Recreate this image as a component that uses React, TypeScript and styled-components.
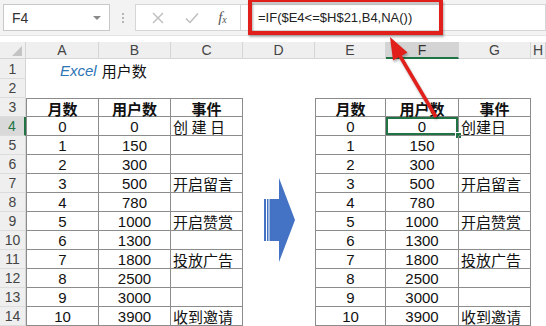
import React from 'react';
import styled, { createGlobalStyle } from 'styled-components';

const GlobalStyle = createGlobalStyle`
  html, body {
    margin: 0;
    padding: 0;
    background: #ffffff;
  }
  body {
    font-family: "Liberation Sans", "Noto Sans CJK SC", sans-serif;
  }
`;

const Page = styled.div`
  position: relative;
  width: 546px;
  height: 326px;
  overflow: hidden;
  background: #ffffff;
`;

const Toolbar = styled.div`
  display: flex;
  align-items: center;
  height: 36px;
  padding-left: 3px;
  box-sizing: border-box;
  background: #f3f3f3;
  border-bottom: 1px solid #e3e3e3;
`;

const NameBox = styled.div`
  display: flex;
  align-items: center;
  justify-content: space-between;
  width: 107px;
  height: 27px;
  box-sizing: border-box;
  padding: 0 8px 0 8px;
  background: #ffffff;
  border: 1px solid #c8c8c8;
  font-size: 14px;
  color: #333;
`;

const Caret = styled.span`
  width: 0;
  height: 0;
  border-left: 4px solid transparent;
  border-right: 4px solid transparent;
  border-top: 4px solid #8a8a8a;
`;

const Grip = styled.div`
  display: flex;
  flex-direction: column;
  align-items: center;
  gap: 2px;
  width: 25px;
`;

const GripDot = styled.span`
  width: 2px;
  height: 2px;
  background: #b5b5b5;
`;

const FxBox = styled.div`
  display: flex;
  align-items: center;
  justify-content: space-around;
  width: 105px;
  height: 27px;
  box-sizing: border-box;
  background: #ffffff;
  border: 1px solid #d6d6d6;
  border-right: none;
  padding: 0 4px 0 6px;
`;

const FxLabel = styled.span`
  font-family: "Liberation Serif", serif;
  font-style: italic;
  font-size: 15px;
  color: #555;

  sub {
    font-size: 10px;
    vertical-align: -1px;
  }
`;

const FormulaInput = styled.div`
  flex: 1;
  display: flex;
  align-items: center;
  height: 27px;
  box-sizing: border-box;
  padding-left: 17px;
  background: #ffffff;
  border: 1px solid #d6d6d6;
  font-size: 13px;
  color: #222;
`;

const Sheet = styled.div`
  display: grid;
  grid-template-columns: 26px 73px 72px 72px 72px 71px 73px 72px 1fr;
  grid-template-rows: 17px 20px 19px repeat(12, 19px);
  margin-top: 6px;
`;

const Corner = styled.div`
  position: relative;
  background: #efefef;
  border-right: 1px solid #d5d5d5;
  border-bottom: 1px solid #d5d5d5;
  box-sizing: border-box;

  &::after {
    content: '';
    position: absolute;
    right: 3px;
    bottom: 2px;
    width: 0;
    height: 0;
    border-left: 10px solid transparent;
    border-bottom: 10px solid #c4c4c4;
  }
`;

const ColHead = styled.div<{ $active?: boolean }>`
  display: flex;
  align-items: center;
  justify-content: center;
  box-sizing: border-box;
  background: ${p => (p.$active ? '#d4d4d4' : '#efefef')};
  border-right: 1px solid #d5d5d5;
  border-bottom: ${p => (p.$active ? '2px solid #217346' : '1px solid #d5d5d5')};
  font-size: 14px;
  color: ${p => (p.$active ? '#333' : '#444')};
`;

const RowHead = styled.div<{ $active?: boolean }>`
  display: flex;
  align-items: center;
  justify-content: center;
  box-sizing: border-box;
  background: ${p => (p.$active ? '#d9d9d9' : '#efefef')};
  border-right: ${p => (p.$active ? '2px solid #217346' : '1px solid #d5d5d5')};
  border-bottom: 1px solid #dcdcdc;
  font-size: 14px;
  color: ${p => (p.$active ? '#217346' : '#444')};
`;

const Cell = styled.div<{
  $boxed?: boolean;
  $top?: boolean;
  $left?: boolean;
  $align?: 'left' | 'center';
  $bold?: boolean;
  $selected?: boolean;
  $spread?: boolean;
  $span?: string;
}>`
  position: relative;
  grid-column: ${p => p.$span || 'auto'};
  display: flex;
  align-items: center;
  justify-content: ${p => (p.$align === 'left' ? 'flex-start' : 'center')};
  box-sizing: border-box;
  padding: 1px 2px 0 2px;
  font-size: 15px;
  font-weight: ${p => (p.$bold ? 700 : 400)};
  letter-spacing: ${p => (p.$spread ? '3.5px' : 'normal')};
  color: #111;
  white-space: nowrap;
  border-right: ${p => (p.$boxed ? '1px solid #8c8c8c' : 'none')};
  border-bottom: ${p => (p.$boxed ? '1px solid #8c8c8c' : 'none')};
  border-top: ${p => (p.$top ? '1px solid #8c8c8c' : 'none')};
  border-left: ${p => (p.$left ? '1px solid #8c8c8c' : 'none')};
  box-shadow: ${p => (p.$selected ? 'inset 0 0 0 2px #217346' : 'none')};

  ${p =>
    p.$selected &&
    `
    &::after {
      content: '';
      position: absolute;
      right: -4px;
      bottom: -4px;
      width: 5px;
      height: 5px;
      background: #217346;
      border: 1px solid #ffffff;
    }
  `}
`;

const Title = styled.div`
  grid-column: 2 / span 3;
  display: flex;
  align-items: center;
  padding: 2px 0 0 34px;
  font-size: 15px;
  color: #111;
`;

const Brand = styled.span`
  font-style: italic;
  color: #2e75b6;
  margin-right: 5px;
`;

const Overlay = styled.svg`
  position: absolute;
  left: 0;
  top: 0;
  width: 546px;
  height: 326px;
  pointer-events: none;
  filter: drop-shadow(1px 2px 1px rgba(0, 0, 0, 0.3));
`;

const BlockArrow = styled.svg`
  position: absolute;
  left: 262px;
  top: 176px;
  width: 38px;
  height: 90px;
`;

const COLS = ['A', 'B', 'C', 'D', 'E', 'F', 'G', 'H'];
const HEADS = ['月数', '用户数', '事件'];
const users = [0, 150, 300, 500, 780, 1000, 1300, 1800, 2500, 3000, 3900];
const events = ['创建日', '', '', '开启留言', '', '开启赞赏', '', '投放广告', '', '', '收到邀请'];

// three cells of one table row; r = 0 is the heading row
function tableRow(side: 'left' | 'right', r: number) {
  if (r === 0) {
    return HEADS.map((h, i) => (
      <Cell key={`${side}h${i}`} $boxed $top $left={i === 0} $bold>
        {h}
      </Cell>
    ));
  }
  const i = r - 1;
  return [
    <Cell key={`${side}m${i}`} $boxed $left>{i}</Cell>,
    <Cell key={`${side}u${i}`} $boxed $selected={side === 'right' && i === 0}>
      {users[i]}
    </Cell>,
    <Cell key={`${side}e${i}`} $boxed $align="left" $spread={side === 'left' && i === 0}>
      {events[i]}
    </Cell>,
  ];
}

function App() {
  const rows: React.ReactNode[] = [];
  for (let r = 0; r < 12; r++) {
    rows.push(<RowHead key={`rh${r}`} $active={r === 1}>{r + 3}</RowHead>);
    rows.push(...tableRow('left', r));
    rows.push(<Cell key={`d${r}`} />);
    rows.push(...tableRow('right', r));
    rows.push(<Cell key={`h${r}`} />);
  }

  return (
    <Page>
      <GlobalStyle />
      <Toolbar>
        <NameBox>
          F4
          <Caret />
        </NameBox>
        <Grip>
          <GripDot />
          <GripDot />
          <GripDot />
        </Grip>
        <FxBox>
          <svg width="14" height="14" viewBox="0 0 14 14">
            <path d="M2 2 L12 12 M12 2 L2 12" stroke="#bdbdbd" strokeWidth="1.4" />
          </svg>
          <svg width="16" height="14" viewBox="0 0 16 14">
            <path d="M2 7.5 L6 11.5 L14 2.5" stroke="#bdbdbd" strokeWidth="1.5" fill="none" />
          </svg>
          <FxLabel>
            f<sub>x</sub>
          </FxLabel>
        </FxBox>
        <FormulaInput>=IF($E4&lt;=$H$21,B4,NA())</FormulaInput>
      </Toolbar>

      <Sheet>
        <Corner />
        {COLS.map(c => (
          <ColHead key={c} $active={c === 'F'}>{c}</ColHead>
        ))}

        <RowHead>1</RowHead>
        <Title>
          <Brand>Excel</Brand>用户数
        </Title>
        <Cell $span="5 / span 5" />

        <RowHead>2</RowHead>
        <Cell $span="2 / span 8" />

        {rows}
      </Sheet>

      <BlockArrow viewBox="0 0 38 90">
        <rect x="2" y="23" width="2" height="42" fill="#4472c4" />
        <rect x="5" y="23" width="1.5" height="42" fill="#4472c4" />
        <polygon points="7.5,23 17,23 17,2 33,44 17,86 17,65 7.5,65" fill="#4472c4" />
      </BlockArrow>

      <Overlay viewBox="0 0 546 326">
        <rect x="250" y="0" width="191" height="33" fill="none" stroke="#e1201c" strokeWidth="4" />
        <line x1="436" y1="117" x2="400" y2="56" stroke="#e1201c" strokeWidth="3.5" />
        <polygon points="390,37 407.5,52.5 393,60.5" fill="#e1201c" />
      </Overlay>
    </Page>
  );
}

export default App;
